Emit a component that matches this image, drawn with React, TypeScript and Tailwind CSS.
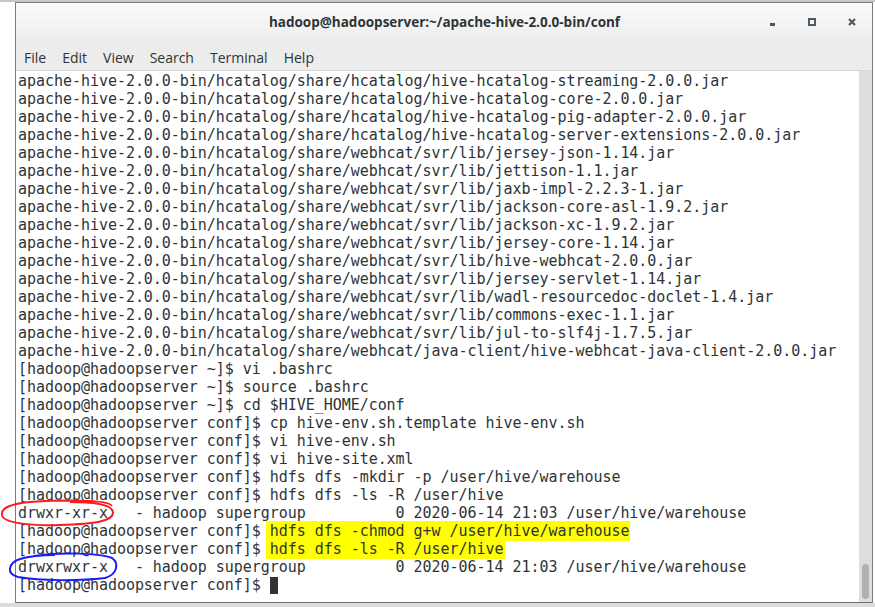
import React from "react";

const jarLines = [
  "apache-hive-2.0.0-bin/hcatalog/share/hcatalog/hive-hcatalog-streaming-2.0.0.jar",
  "apache-hive-2.0.0-bin/hcatalog/share/hcatalog/hive-hcatalog-core-2.0.0.jar",
  "apache-hive-2.0.0-bin/hcatalog/share/hcatalog/hive-hcatalog-pig-adapter-2.0.0.jar",
  "apache-hive-2.0.0-bin/hcatalog/share/hcatalog/hive-hcatalog-server-extensions-2.0.0.jar",
  "apache-hive-2.0.0-bin/hcatalog/share/webhcat/svr/lib/jersey-json-1.14.jar",
  "apache-hive-2.0.0-bin/hcatalog/share/webhcat/svr/lib/jettison-1.1.jar",
  "apache-hive-2.0.0-bin/hcatalog/share/webhcat/svr/lib/jaxb-impl-2.2.3-1.jar",
  "apache-hive-2.0.0-bin/hcatalog/share/webhcat/svr/lib/jackson-core-asl-1.9.2.jar",
  "apache-hive-2.0.0-bin/hcatalog/share/webhcat/svr/lib/jackson-xc-1.9.2.jar",
  "apache-hive-2.0.0-bin/hcatalog/share/webhcat/svr/lib/jersey-core-1.14.jar",
  "apache-hive-2.0.0-bin/hcatalog/share/webhcat/svr/lib/hive-webhcat-2.0.0.jar",
  "apache-hive-2.0.0-bin/hcatalog/share/webhcat/svr/lib/jersey-servlet-1.14.jar",
  "apache-hive-2.0.0-bin/hcatalog/share/webhcat/svr/lib/wadl-resourcedoc-doclet-1.4.jar",
  "apache-hive-2.0.0-bin/hcatalog/share/webhcat/svr/lib/commons-exec-1.1.jar",
  "apache-hive-2.0.0-bin/hcatalog/share/webhcat/svr/lib/jul-to-slf4j-1.7.5.jar",
  "apache-hive-2.0.0-bin/hcatalog/share/webhcat/java-client/hive-webhcat-java-client-2.0.0.jar",
];

const home = "[hadoop@hadoopserver ~]$ ";
const conf = "[hadoop@hadoopserver conf]$ ";

const shellLines: { text: string; mark?: string }[] = [
  { text: home + "vi .bashrc" },
  { text: home + "source .bashrc" },
  { text: home + "cd $HIVE_HOME/conf" },
  { text: conf + "cp hive-env.sh.template hive-env.sh" },
  { text: conf + "vi hive-env.sh" },
  { text: conf + "vi hive-site.xml" },
  { text: conf + "hdfs dfs -mkdir -p /user/hive/warehouse" },
  { text: conf + "hdfs dfs -ls -R /user/hive" },
  { text: "drwxr-xr-x   - hadoop supergroup          0 2020-06-14 21:03 /user/hive/warehouse" },
  { text: conf, mark: "hdfs dfs -chmod g+w /user/hive/warehouse" },
  { text: conf, mark: "hdfs dfs -ls -R /user/hive" },
  { text: "drwxrwxr-x   - hadoop supergroup          0 2020-06-14 21:03 /user/hive/warehouse" },
];

const menus = ["File", "Edit", "View", "Search", "Terminal", "Help"];

export default function App() {
  return (
    <div className="relative w-[875px] h-[607px] overflow-hidden bg-white flex flex-col">
      <div className="h-[2px] bg-[#c8c8c8]" />
      <div className="flex flex-1">
        <div className="w-[15px] bg-white" />
        <div className="w-[858px] flex flex-col border-x border-t border-[#7b7b7b]">
          {/* title bar */}
          <div className="h-[41px] relative flex items-center justify-center bg-gradient-to-b from-[#fbfbfb] to-[#ececec] font-['Open_Sans',sans-serif]">
            <span className="text-[13.5px] font-bold text-[#2e3436] -mt-[3px] ml-[1px]">
              hadoop@hadoopserver:~/apache-hive-2.0.0-bin/conf
            </span>
            <div className="absolute right-[16px] top-0 h-full flex items-center gap-[32px] -mt-[2px]">
              <div className="w-[6px] h-[8px] flex items-end">
                <div className="w-[5px] h-[3px] bg-[#4e5a61]" />
              </div>
              <div className="w-[8px] h-[8px] border-2 border-[#4e5a61]" />
              <svg width="8" height="8" viewBox="0 0 8 8">
                <path d="M1 1 L7 7 M7 1 L1 7" stroke="#4e5a61" strokeWidth="2.2" />
              </svg>
            </div>
          </div>
          {/* menu bar */}
          <div className="h-[27px] flex items-center gap-[16px] pl-[8px] bg-[#ececec] border-b border-[#d6d6d6] font-['Open_Sans',sans-serif] text-[14px] text-[#2e3436]">
            {menus.map((m) => (
              <span key={m}>{m}</span>
            ))}
          </div>
          {/* terminal body */}
          <div className="flex flex-1 border-b border-[#6e6e6e]">
            <div className="flex-1 bg-white pl-[2px] pt-[1px] font-['DejaVu_Sans_Mono',monospace] text-[15px] leading-[18px] tracking-[-0.04px] text-[#2e3436] whitespace-pre">
              {jarLines.map((l, i) => (
                <div key={i} className="h-[18px]">{l}</div>
              ))}
              {shellLines.map((l, i) => (
                <div key={"s" + i} className="h-[18px]">
                  {l.text}
                  {l.mark && (
                    <span className="bg-[#ffff00] py-[1px] pl-[4px] -ml-[4px] pr-[1px]">{l.mark}</span>
                  )}
                </div>
              ))}
              <div className="h-[18px] flex items-center">
                <span>{conf}</span>
                <span className="w-[8px] h-[17px] bg-[#2e3436]" />
              </div>
            </div>
            <div className="w-[13px] bg-[#dedede] flex flex-col justify-end items-center pb-[3px]">
              <div className="w-[7px] h-[35px] rounded-full bg-[#b1b1b1]" />
            </div>
          </div>
        </div>
      </div>
      <div className="h-[4px] bg-[#dcdcdc]" />

      {/* hand-drawn annotations over the screenshot */}
      <svg className="absolute left-0 top-0 pointer-events-none" width="875" height="607">
        <path
          d="M112 506 C108 499 60 500 30 502 C8 504 1 509 2 515 C3 523 30 526 60 525 C95 524 114 521 113 512 C112 505 95 502 70 502"
          fill="none"
          stroke="#ff1a1a"
          strokeWidth="2"
        />
        <path
          d="M34 556 C60 552 100 553 112 558 C119 563 118 574 105 578 C80 581 40 581 18 577 C6 574 8 563 20 559 C30 556 45 555 55 555"
          fill="none"
          stroke="#1a1aff"
          strokeWidth="2"
        />
      </svg>
    </div>
  );
}
